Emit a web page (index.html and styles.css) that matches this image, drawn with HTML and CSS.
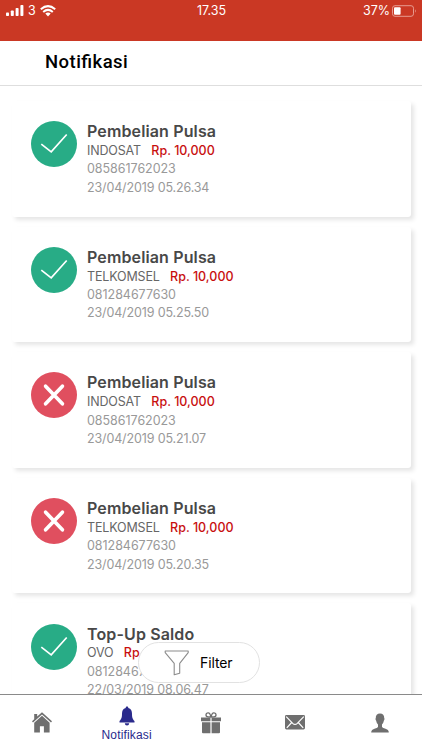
FILE: index.html
```
<!DOCTYPE html>
<html lang="id">
<head>
    <meta charset="UTF-8">
    <meta name="viewport" content="width=device-width, initial-scale=1.0">
    <title>Notifikasi</title>
    <link rel="stylesheet" href="styles.css">
</head>
<body>
    <!-- Ikon status transaksi -->
    <svg class="defs" width="0" height="0">
        <symbol id="icon-success" viewBox="0 0 46 46">
            <circle cx="23" cy="23" r="23" fill="#28ac86"/>
            <path d="M10.3 23.2 L20.2 30.8 L35.7 13.5" fill="none" stroke="#fff" stroke-width="1.7"/>
        </symbol>
        <symbol id="icon-failed" viewBox="0 0 46 46">
            <circle cx="23" cy="23" r="23" fill="#e04f5f"/>
            <path d="M14.6 14.2 L31.4 31.8 M31.4 14.2 L14.6 31.8" fill="none" stroke="#fff" stroke-width="3.7" stroke-linecap="round"/>
        </symbol>
    </svg>

    <div class="status-bar">
        <div class="status-left">
            <svg width="18" height="12" viewBox="0 0 18 12" fill="#fff">
                <rect x="0" y="7.5" width="3" height="3.5" rx="0.8"/>
                <rect x="4.8" y="5.5" width="3" height="5.5" rx="0.8"/>
                <rect x="9.6" y="3" width="3" height="8" rx="0.8"/>
                <rect x="14.4" y="0" width="3" height="11" rx="0.8"/>
            </svg>
            <span class="carrier">3</span>
            <svg width="16" height="12" viewBox="0 0 16 12">
                <path d="M0.8 4.2 Q8 -2 15.2 4.2 M3.2 6.9 Q8 2.8 12.8 6.9" fill="none" stroke="#fff" stroke-width="2"/>
                <path d="M5.3 8.6 Q8 6.3 10.7 8.6 L8 11.5 Z" fill="#fff"/>
            </svg>
        </div>
        <span class="clock">17.35</span>
        <div class="status-right">
            <span>37%</span>
            <svg width="25" height="12" viewBox="0 0 25 12">
                <rect x="0.5" y="0.7" width="21" height="10.6" rx="2.5" fill="none" stroke="#e79b8f"/>
                <rect x="2" y="2.2" width="6.6" height="7.6" rx="1" fill="#fff"/>
                <path d="M23 4.2 Q24.8 6 23 7.8 Z" fill="#e79b8f"/>
            </svg>
        </div>
    </div>

    <header>
        <h1>Notifikasi</h1>
    </header>

    <!-- Daftar notifikasi -->
    <main class="list">
        <div class="card">
            <svg class="card-icon"><use href="#icon-success"/></svg>
            <div class="card-body">
                <h2>Pembelian Pulsa</h2>
                <p class="provider">INDOSAT <span class="price">Rp. 10,000</span></p>
                <p>085861762023</p>
                <p class="date">23/04/2019 05.26.34</p>
            </div>
        </div>
        <div class="card">
            <svg class="card-icon"><use href="#icon-success"/></svg>
            <div class="card-body">
                <h2>Pembelian Pulsa</h2>
                <p class="provider">TELKOMSEL <span class="price">Rp. 10,000</span></p>
                <p>081284677630</p>
                <p class="date">23/04/2019 05.25.50</p>
            </div>
        </div>
        <div class="card">
            <svg class="card-icon"><use href="#icon-failed"/></svg>
            <div class="card-body">
                <h2>Pembelian Pulsa</h2>
                <p class="provider">INDOSAT <span class="price">Rp. 10,000</span></p>
                <p>085861762023</p>
                <p class="date">23/04/2019 05.21.07</p>
            </div>
        </div>
        <div class="card">
            <svg class="card-icon"><use href="#icon-failed"/></svg>
            <div class="card-body">
                <h2>Pembelian Pulsa</h2>
                <p class="provider">TELKOMSEL <span class="price">Rp. 10,000</span></p>
                <p>081284677630</p>
                <p class="date">23/04/2019 05.20.35</p>
            </div>
        </div>
        <div class="card">
            <svg class="card-icon"><use href="#icon-success"/></svg>
            <div class="card-body">
                <h2>Top-Up Saldo</h2>
                <p class="provider">OVO <span class="price">Rp. 10,000</span></p>
                <p>081284677630</p>
                <p class="date">22/03/2019 08.06.47</p>
            </div>
        </div>
        <button class="filter-button">
            <svg width="26" height="26" viewBox="0 0 26 26" fill="none" stroke="#8c8c8c" stroke-width="1.1" stroke-linejoin="round">
                <path d="M1.2 1 H24.2 V2.6 L15.7 13.3 V23.2 L10.2 24.8 V13.3 L1.2 2.6 Z"/>
            </svg>
            <span>Filter</span>
        </button>
    </main>

    <!-- Menu bawah -->
    <nav class="tabs">
        <a class="tab">
            <svg width="20" height="21" viewBox="0 0 20 21" fill="#6f6f6f">
                <path d="M2.2 2 H5.2 V4.6 L10 0.3 L20 9.3 L19 10.4 L10 2.4 L1 10.4 L0 9.3 L2.2 7.3 Z"/>
                <path d="M2.2 10.7 L10 3.8 L17.6 10.7 V20.5 H11.9 V14.2 H7.9 V20.5 H2.2 Z"/>
            </svg>
        </a>
        <a class="tab active">
            <svg width="16" height="20" viewBox="0 0 16 20" fill="#2a2a8c">
                <path d="M8 0.5 C8.9 0.5 9.4 1.2 9.3 2 C12 2.7 13 5 13 7.8 C13 12 13.8 13.5 15.5 15 V16.5 H0.5 V15 C2.2 13.5 3 12 3 7.8 C3 5 4 2.7 6.7 2 C6.6 1.2 7.1 0.5 8 0.5 Z"/>
                <path d="M5.8 17.3 H10.2 C10 18.8 9.2 19.5 8 19.5 C6.8 19.5 6 18.8 5.8 17.3 Z"/>
            </svg>
            <span>Notifikasi</span>
        </a>
        <a class="tab">
            <svg width="20" height="22" viewBox="0 0 20 22" fill="#6f6f6f">
                <path d="M0 5.4 H9.4 V9.2 H0 Z M10.6 5.4 H20 V9.2 H10.6 Z M1 10.2 H9.4 V21.2 H2 Q1 21.2 1 20.2 Z M10.6 10.2 H19 V20.2 Q19 21.2 18 21.2 H10.6 Z"/>
                <path d="M9.8 5 C9.5 2.6 8.8 0.8 7.2 0.8 C4.4 0.8 4.2 4.6 7 4.9 Z M10.2 5 C10.5 2.6 11.2 0.8 12.8 0.8 C15.6 0.8 15.8 4.6 13 4.9 Z" fill="none" stroke="#6f6f6f" stroke-width="1.3"/>
            </svg>
        </a>
        <a class="tab">
            <svg width="20" height="15" viewBox="0 0 20 15">
                <rect width="20" height="14.5" rx="1.4" fill="#6f6f6f"/>
                <path d="M1.2 1.6 L7.7 8.4 Q10 10.5 12.3 8.4 L18.8 1.6 M1.8 12.9 L6.7 7.5 M18.2 12.9 L13.3 7.5" fill="none" stroke="#fff" stroke-width="1.2"/>
            </svg>
        </a>
        <a class="tab">
            <svg width="18" height="20" viewBox="0 0 18 20" fill="#6f6f6f">
                <path d="M9 0.5 C11.8 0.5 13.4 2.3 13.2 5 C13.7 5.4 13.6 7.2 12.8 7.7 C12.5 9.4 11.8 10.6 11 11.5 V14 C12.2 15.6 15.6 15.7 16.9 17 C17.6 17.7 17.8 18.6 17.8 19.5 H0.2 C0.2 18.6 0.4 17.7 1.1 17 C2.4 15.7 5.8 15.6 7 14 V11.5 C6.2 10.6 5.5 9.4 5.2 7.7 C4.4 7.2 4.3 5.4 4.8 5 C4.6 2.3 6.2 0.5 9 0.5 Z"/>
            </svg>
        </a>
    </nav>
</body>
</html>
```
FILE: styles.css
```
* {
    box-sizing: border-box;
    margin: 0;
    padding: 0;
}

body {
    display: flex;
    flex-direction: column;
    height: 750px;
    overflow: hidden;
    background-color: #fff;
    font-family: Inter, "Liberation Sans", sans-serif;
}

.defs {
    position: absolute;
}

.status-bar {
    display: grid;
    grid-template-columns: 1fr auto 1fr;
    align-items: start;
    flex: none;
    height: 41px;
    padding: 3px 5px 0 6px;
    background-color: #ca3824;
    color: #fff;
    font-size: 12.5px;
    line-height: 15px;
}

.status-left,
.status-right {
    display: flex;
    align-items: center;
    height: 15px;
}

.status-left {
    gap: 4px;
}

.status-right {
    justify-content: flex-end;
    gap: 2px;
}

header {
    flex: none;
    height: 45px;
    padding: 9px 45px 0;
    border-bottom: 1px solid #dedede;
}

h1 {
    font-family: Roboto, sans-serif;
    font-size: 18.5px;
    font-weight: 500;
    font-feature-settings: "liga" 1;
    line-height: 24px;
    letter-spacing: 0.45px;
    color: #000;
}

/* Lista */
.list {
    position: relative;
    flex: 1;
    min-height: 0;
    overflow: hidden;
    padding: 15px 11px 0 12px;
}

.card {
    display: flex;
    height: 115.6px;
    margin-bottom: 10px;
    padding: 20.2px 19px;
    background-color: #fff;
    border-radius: 3px;
    box-shadow: 3px 3px 4px rgba(0, 0, 0, 0.1);
}

.card-icon {
    flex: none;
    width: 46px;
    height: 46px;
}

.card-body {
    margin-left: 10px;
    font-size: 12.5px;
    line-height: 18.4px;
    letter-spacing: -0.04px;
    color: #999;
    white-space: nowrap;
}

h2 {
    padding-bottom: 0.8px;
    font-size: 16px;
    font-weight: 600;
    line-height: 20px;
    letter-spacing: 0.13px;
    color: #484848;
}

.provider {
    letter-spacing: -0.15px;
    color: #666;
}

.price {
    margin-left: 7px;
    font-weight: 500;
    letter-spacing: 0;
    color: #c80f0f;
}

.date {
    letter-spacing: -0.14px;
}

.filter-button {
    position: absolute;
    left: 138px;
    bottom: 11px;
    display: flex;
    align-items: center;
    gap: 10px;
    width: 122px;
    height: 41px;
    padding-left: 25px;
    background-color: #fff;
    border: 1px solid #e2e2e2;
    border-radius: 21px;
    font-family: Inter, sans-serif;
    font-size: 14px;
    letter-spacing: -0.1px;
    color: #000;
}

/* Menu */
.tabs {
    display: flex;
    flex: none;
    height: 56px;
    border-top: 1px solid #8a8a8a;
    background-color: #fff;
}

.tab {
    display: flex;
    flex: 1;
    flex-direction: column;
    align-items: center;
    justify-content: center;
}

.tab.active {
    gap: 1px;
    padding-top: 3px;
    font-family: "Liberation Sans", sans-serif;
    font-size: 12px;
    line-height: 16px;
    letter-spacing: 0.15px;
    color: #2a2a8c;
}
```
